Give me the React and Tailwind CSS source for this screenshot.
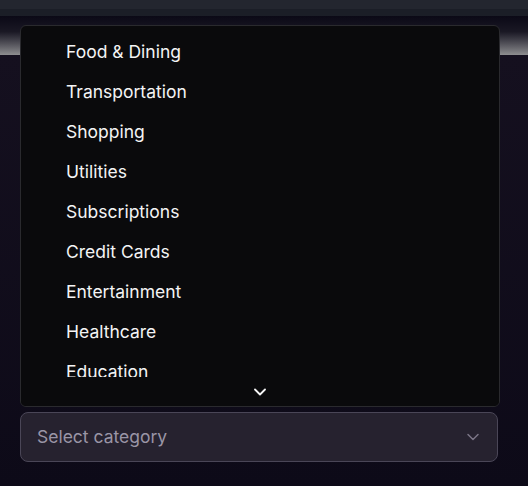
import React from "react";

const items = [
  "Food & Dining",
  "Transportation",
  "Shopping",
  "Utilities",
  "Subscriptions",
  "Credit Cards",
  "Entertainment",
  "Healthcare",
  "Education",
];

export default function App() {
  return (
    <div
      className="relative w-[528px] h-[486px] overflow-hidden bg-[#0d0a18]"
      style={{ fontFamily: "Inter, 'Noto Sans', sans-serif" }}
    >
      <div className="h-[9px] bg-[#23262f]" />
      <div className="h-[7px] bg-[#1b1e27]" />
      <div className="h-[39px] bg-gradient-to-b from-[#0b0916] via-[#1a1824] via-40% to-[#8e8e90]" />
      <div className="h-[431px] bg-gradient-to-b from-[#15101f] to-[#0d0a18] pt-[357px] px-5">
        <button className="flex w-[478px] h-[50px] items-center justify-between rounded-lg border border-[#4a4657] bg-[#26222f] pl-4 pr-[14px] text-[17.5px] text-[#9a95a6]">
          <span>Select category</span>
          <svg width="20" height="20" viewBox="0 0 24 24" fill="none" stroke="#7a7586" strokeWidth="1.8" strokeLinecap="round" strokeLinejoin="round">
            <path d="m6 9 6 6 6-6" />
          </svg>
        </button>
      </div>

      <div className="absolute left-5 top-[25px] w-[480px] h-[382px] rounded-md border border-[#2a2a2e] bg-[#0a0a0c] overflow-hidden flex flex-col">
        <div className="flex-1 overflow-hidden pt-[6px] px-1">
          {items.map((t) => (
            <div key={t} className="h-10 flex items-center pl-[41px] text-[17.5px] text-[#f4f4f5]">
              {t}
            </div>
          ))}
        </div>
        <div className="h-[29px] flex items-center justify-center shrink-0 bg-[#0a0a0c]">
          <svg width="20" height="20" viewBox="0 0 24 24" fill="none" stroke="#f4f4f5" strokeWidth="2.2" strokeLinecap="round" strokeLinejoin="round">
            <path d="m6 9 6 6 6-6" />
          </svg>
        </div>
      </div>
    </div>
  );
}
